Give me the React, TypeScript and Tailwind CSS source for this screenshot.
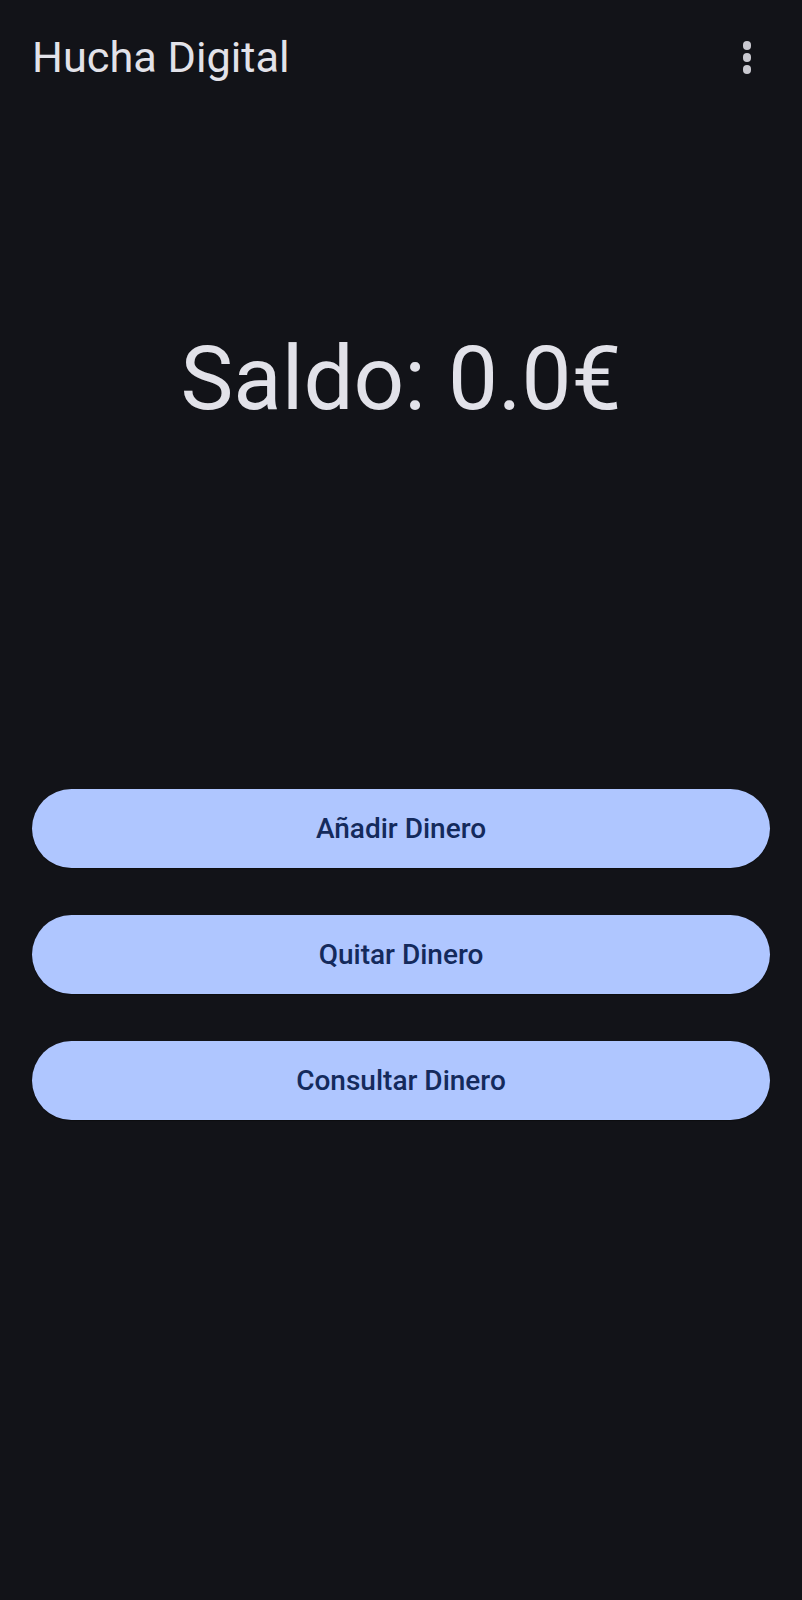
import React from "react";

export default function App() {
  const buttons = ["Añadir Dinero", "Quitar Dinero", "Consultar Dinero"];
  return (
    <div className="min-h-[1600px] w-full bg-[#121318] font-['Roboto',sans-serif] flex flex-col">
      <header className="h-[115px] flex items-center justify-between pl-[32px] pr-[51px]">
        <h1 className="text-[43.3px] leading-none font-normal text-[#e2e2e9]">Hucha Digital</h1>
        <div className="flex flex-col items-center gap-[3.5px]">
          <span className="block w-[8.5px] h-[8.5px] rounded-full bg-[#c9c9d0]" />
          <span className="block w-[8.5px] h-[8.5px] rounded-full bg-[#c9c9d0]" />
          <span className="block w-[8.5px] h-[8.5px] rounded-full bg-[#c9c9d0]" />
        </div>
      </header>
      <div className="mt-[219px] text-center text-[89px] leading-none font-normal text-[#e2e2e9]">
        Saldo: 0.0€
      </div>
      <div className="mt-[366px] px-[32px] flex flex-col gap-[47px]">
        {buttons.map((b) => (
          <button
            key={b}
            className="h-[79px] w-full rounded-full bg-[#afc6ff] text-[#142a5c] text-[28px] font-medium leading-none shadow-[0_1px_1px_rgba(0,0,0,0.35)]"
          >
            {b}
          </button>
        ))}
      </div>
    </div>
  );
}
